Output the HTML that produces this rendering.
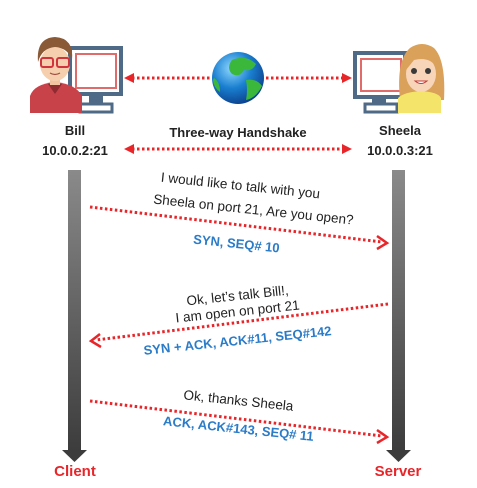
<!DOCTYPE html>
<html><head><meta charset="utf-8"><style>
html,body{margin:0;padding:0;background:#fff;width:477px;height:488px;overflow:hidden}
svg{display:block}
text{font-family:"Liberation Sans",sans-serif}
</style></head><body>
<svg width="477" height="488" viewBox="0 0 477 488" xmlns="http://www.w3.org/2000/svg">
<defs>
<linearGradient id="bar" x1="0" y1="0" x2="0" y2="1"><stop offset="0" stop-color="#8a8a8a"/><stop offset="1" stop-color="#3c3c3c"/></linearGradient>
<radialGradient id="globe" cx="0.38" cy="0.32" r="0.75"><stop offset="0" stop-color="#8fd8ff"/><stop offset="0.5" stop-color="#1a7fd0"/><stop offset="1" stop-color="#0a3a86"/></radialGradient>
</defs>
<rect x="70" y="48" width="51" height="46" fill="none" stroke="#4e6a86" stroke-width="4"/>
<rect x="76" y="54" width="40" height="34" fill="none" stroke="#e06b6b" stroke-width="2"/>
<rect x="89" y="95" width="14" height="10" fill="#4e6a86"/>
<rect x="80" y="104" width="32" height="8" fill="none" stroke="#4e6a86" stroke-width="3"/>
<path d="M30 113 L30 96 Q34 84 55 82 Q76 84 82 96 L82 113 Z" fill="#c8424a"/>
<path d="M48 84 L55 94 L62 84 Z" fill="#8e2a30"/>
<rect x="50" y="76" width="10" height="9" fill="#f1c3a0"/>
<ellipse cx="55" cy="64" rx="15" ry="17" fill="#f6cfae"/>
<path d="M38 62 Q36 38 55 37 Q74 38 72 60 Q68 48 55 47 Q42 48 38 62Z" fill="#8a5a36"/>
<rect x="41" y="58" width="12" height="9" rx="2" fill="none" stroke="#d0353d" stroke-width="2"/>
<rect x="57" y="58" width="12" height="9" rx="2" fill="none" stroke="#d0353d" stroke-width="2"/>
<path d="M50 73 Q55 76 60 73" fill="none" stroke="#a05040" stroke-width="1.2"/>
<rect x="355" y="53" width="50" height="44" fill="none" stroke="#4e6a86" stroke-width="4"/>
<rect x="361" y="59" width="40" height="32" fill="none" stroke="#e06b6b" stroke-width="2"/>
<rect x="372" y="98" width="14" height="7" fill="#4e6a86"/>
<rect x="365" y="104" width="32" height="8" fill="none" stroke="#4e6a86" stroke-width="3"/>
<path d="M400 100 Q396 60 410 48 Q422 40 434 48 Q446 60 444 100 Z" fill="#d9a15a"/>
<path d="M398 113 L398 98 Q404 92 421 91 Q438 92 441 98 L441 113 Z" fill="#f4e56a"/>
<ellipse cx="421" cy="74" rx="15" ry="18" fill="#f8d5b8"/>
<path d="M406 70 Q408 52 421 52 Q436 52 437 68 Q430 56 414 60 Z" fill="#d9a15a"/>
<circle cx="414" cy="71" r="3" fill="#3a3a3a"/><circle cx="428" cy="71" r="3" fill="#3a3a3a"/>
<path d="M415 81 Q421 86 427 81 Z" fill="#fff" stroke="#c04040" stroke-width="1"/>
<circle cx="238" cy="78" r="26" fill="url(#globe)"/>
<path d="M232 60 Q246 54 256 64 Q252 72 244 70 Q240 78 232 74 Q226 68 232 60Z M246 80 Q256 78 262 86 Q256 98 246 100 Q248 90 246 80Z M214 78 Q220 82 220 92 Q214 88 213 80Z" fill="#3bb83c"/>
<g stroke="#e8262a" stroke-width="3" stroke-dasharray="2.5 2.5" fill="none">
<line x1="132" y1="78" x2="210" y2="78"/><line x1="266" y1="78" x2="344" y2="78"/>
<line x1="132" y1="149" x2="344" y2="149"/>
</g>
<g fill="#e8262a">
<path d="M124 78 L134 73 L134 83Z"/><path d="M352 78 L342 73 L342 83Z"/>
<path d="M124 149 L134 144 L134 154Z"/><path d="M352 149 L342 144 L342 154Z"/>
</g>
<g font-weight="bold" font-size="13" fill="#222" text-anchor="middle">
<text x="75" y="135">Bill</text><text x="75" y="155">10.0.0.2:21</text>
<text x="238" y="137">Three-way Handshake</text>
<text x="400" y="135">Sheela</text><text x="400" y="155">10.0.0.3:21</text>
</g>
<rect x="68" y="170" width="13" height="282" fill="url(#bar)"/>
<path d="M62 450 L87 450 L74.5 462Z" fill="#3c3c3c"/>
<rect x="392" y="170" width="13" height="282" fill="url(#bar)"/>
<path d="M386 450 L411 450 L398.5 462Z" fill="#3c3c3c"/>
<g font-weight="bold" font-size="15" fill="#e8262a" text-anchor="middle">
<text x="75" y="476">Client</text><text x="398" y="476">Server</text>
</g>
<g stroke="#e8262a" stroke-width="3" stroke-dasharray="2.5 2.5" fill="none">
<line x1="90" y1="207" x2="382" y2="242"/>
<line x1="388" y1="304" x2="96" y2="340"/>
<line x1="90" y1="401" x2="382" y2="436"/>
</g>
<g stroke="#e8262a" stroke-width="2.5" fill="none">
<path d="M377 236 L387 243 L377 249"/>
<path d="M100 334 L91 341 L101 347"/>
<path d="M377 430 L387 437 L377 443"/>
</g>
<g font-size="13.5" fill="#222" text-anchor="middle">
<text transform="translate(240,190) rotate(6)">I would like to talk with you</text>
<text transform="translate(253,214) rotate(6)">Sheela on port 21, Are you open?</text>
<text transform="translate(238,300) rotate(-6)">Ok, let’s talk Bill!,</text>
<text transform="translate(238,316) rotate(-6)">I am open on port 21</text>
<text transform="translate(238,405) rotate(6)">Ok, thanks Sheela</text>
</g>
<g font-size="13" font-weight="bold" fill="#2a7bc8" text-anchor="middle">
<text transform="translate(236,248) rotate(6)">SYN, SEQ# 10</text>
<text transform="translate(238,345) rotate(-6)">SYN + ACK, ACK#11, SEQ#142</text>
<text transform="translate(238,433) rotate(6)">ACK, ACK#143, SEQ# 11</text>
</g>
</svg>
</body></html>
